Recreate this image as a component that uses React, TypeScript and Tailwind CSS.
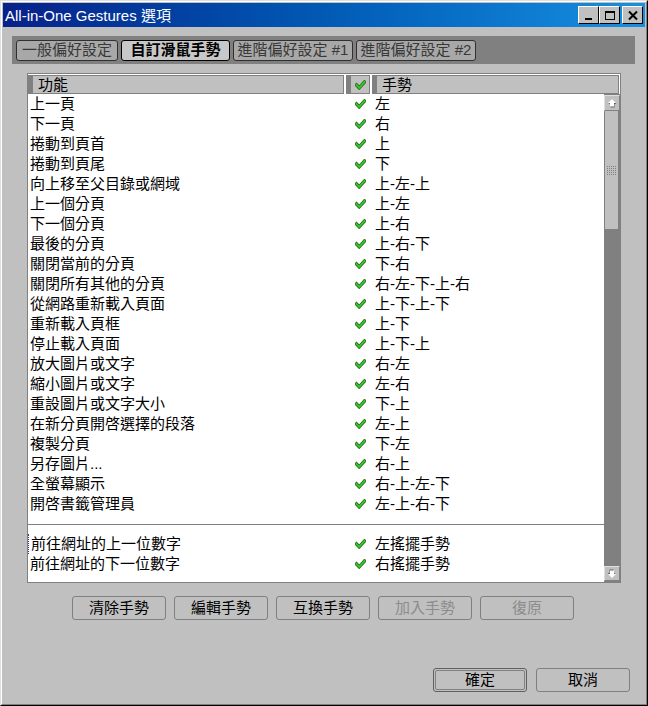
import React from "react";

const rows: [string, string][] = [
  ["上一頁", "左"],
  ["下一頁", "右"],
  ["捲動到頁首", "上"],
  ["捲動到頁尾", "下"],
  ["向上移至父目錄或網域", "上-左-上"],
  ["上一個分頁", "上-左"],
  ["下一個分頁", "上-右"],
  ["最後的分頁", "上-右-下"],
  ["關閉當前的分頁", "下-右"],
  ["關閉所有其他的分頁", "右-左-下-上-右"],
  ["從網路重新載入頁面", "上-下-上-下"],
  ["重新載入頁框", "上-下"],
  ["停止載入頁面", "上-下-上"],
  ["放大圖片或文字", "右-左"],
  ["縮小圖片或文字", "左-右"],
  ["重設圖片或文字大小", "下-上"],
  ["在新分頁開啓選擇的段落", "左-上"],
  ["複製分頁", "下-左"],
  ["另存圖片...", "右-上"],
  ["全螢幕顯示", "右-上-左-下"],
  ["開啓書籤管理員", "左-上-右-下"],
];

const rows2: [string, string][] = [
  ["前往網址的上一位數字", "左搖擺手勢"],
  ["前往網址的下一位數字", "右搖擺手勢"],
];

function Check() {
  return (
    <svg width="11" height="10" viewBox="0 0 11 10">
      <polyline points="1.5,5 4.2,7.8 9.5,2" fill="none" stroke="#3f6f10" strokeWidth="3.4" strokeLinecap="square" />
      <polyline points="1.5,5 4.2,7.8 9.5,2" fill="none" stroke="#22d040" strokeWidth="1.6" strokeLinecap="square" />
    </svg>
  );
}

function Arrow({ down }: { down?: boolean }) {
  return (
    <svg width="10" height="10" viewBox="0 0 10 10" style={down ? { transform: "rotate(180deg)" } : undefined}>
      <polygon points="5.5,2 9.5,6 7.5,6 7.5,9.5 3.5,9.5 3.5,6 1.5,6" fill="#606060" />
      <polygon points="5,1 9,5 7,5 7,8.5 3,8.5 3,5 1,5" fill="#ffffff" />
    </svg>
  );
}

function TitleBtn({ kind }: { kind: "min" | "max" | "close" }) {
  return (
    <div className="w-[21px] h-[18px] bg-[#c0c0c0] border border-t-white border-l-white border-r-black border-b-black flex items-center justify-center">
      <svg width="12" height="11" viewBox="0 0 12 11">
        {kind === "min" && <rect x="2" y="8" width="7" height="2" fill="black" />}
        {kind === "max" && (
          <>
            <rect x="1.5" y="1.5" width="9" height="8" fill="none" stroke="black" strokeWidth="1" />
            <rect x="1" y="1" width="10" height="2" fill="black" />
          </>
        )}
        {kind === "close" && (
          <path d="M2 1.5 L10 9.5 M10 1.5 L2 9.5" stroke="black" strokeWidth="2" />
        )}
      </svg>
    </div>
  );
}

function HeaderCell({ w, children }: { w: string; children?: React.ReactNode }) {
  return (
    <div className={`${w} h-[19px] bg-[#c0c0c0] border border-[#808080] flex items-center`}>
      <div className="w-[4px] h-full bg-[#808080]" />
      {children}
    </div>
  );
}

function Row({ f, g, focus }: { f: string; g: string; focus?: boolean }) {
  return (
    <div className="h-[20px] flex items-center text-[15px] leading-[20px] text-black">
      <div className={`w-[316px] pl-[2px] whitespace-nowrap ${focus ? "border-l border-dotted border-[#3030a0]" : ""}`}>{f}</div>
      <div className="w-[28px] flex justify-center ml-[2px]">
        <Check />
      </div>
      <div className="flex-1 pl-[1px] whitespace-nowrap">{g}</div>
    </div>
  );
}

function Btn({ label, disabled, def }: { label: string; disabled?: boolean; def?: boolean }) {
  return (
    <div
      className={`w-[94px] h-[24px] rounded-[3px] border flex items-center justify-center text-[15px] ${
        def ? "border-[#606060] p-[1px]" : "border-[#808080]"
      } ${disabled ? "text-[#8c8c8c]" : "text-black"}`}
    >
      {def ? (
        <div className="w-full h-full rounded-[2px] border border-[#808080] flex items-center justify-center">{label}</div>
      ) : (
        label
      )}
    </div>
  );
}

export default function App() {
  return (
    <div className="w-[648px] h-[706px] bg-[#c0c0c0] border border-t-[#dfdfdf] border-l-[#dfdfdf] border-r-black border-b-black font-['Liberation_Sans','Noto_Sans_CJK_TC',sans-serif] overflow-hidden">
      <div className="w-full h-full border border-t-white border-l-white border-r-[#808080] border-b-[#808080] p-[1px] flex flex-col">
        {/* Title bar */}
        <div className="h-[24px] bg-gradient-to-r from-[#08208a] to-[#1890e0] flex items-center pl-[2px] pr-[2px]">
          <span className="text-white text-[15px] leading-none">All-in-One Gestures 選項</span>
          <div className="ml-auto flex items-center">
            <TitleBtn kind="min" />
            <TitleBtn kind="max" />
            <div className="w-[2px]" />
            <TitleBtn kind="close" />
          </div>
        </div>

        {/* Tab bar */}
        <div className="mt-[9px] ml-[9px] mr-[10px] h-[28px] bg-[#808080] flex items-start pt-[4px] pl-[4px] gap-[3px]">
          <div className="w-[102px] h-[21px] rounded-[3px] border border-[#303030] bg-[#a8a8a8] text-[#383838] text-[15px] flex items-center justify-center whitespace-nowrap">一般偏好設定</div>
          <div className="w-[109px] h-[21px] rounded-[3px] border border-black bg-[#c8c8c8] text-black font-bold text-[15px] flex items-center justify-center whitespace-nowrap">自訂滑鼠手勢</div>
          <div className="w-[120px] h-[21px] rounded-[3px] border border-[#303030] bg-[#a8a8a8] text-[#383838] text-[15px] flex items-center justify-center whitespace-nowrap">進階偏好設定 #1</div>
          <div className="w-[120px] h-[21px] rounded-[3px] border border-[#303030] bg-[#a8a8a8] text-[#383838] text-[15px] flex items-center justify-center whitespace-nowrap">進階偏好設定 #2</div>
        </div>

        {/* List box */}
        <div className="mt-[9px] ml-[24px] w-[594px] h-[510px] border border-[#808080] bg-white flex flex-col">
          <div className="flex pt-[1px] gap-[2px] h-[20px]">
            <HeaderCell w="w-[316px]">
              <span className="pl-[5px] text-[15px] text-black leading-none">功能</span>
            </HeaderCell>
            <HeaderCell w="w-[24px]">
              <div className="flex-1 flex justify-center">
                <Check />
              </div>
            </HeaderCell>
            <HeaderCell w="w-[247px]">
              <span className="pl-[5px] text-[15px] text-black leading-none">手勢</span>
            </HeaderCell>
          </div>
          <div className="flex flex-1">
            <div className="w-[576px] flex flex-col">
              {rows.map(([f, g]) => (
                <Row key={f} f={f} g={g} />
              ))}
              <div className="h-[20px] flex flex-col justify-center">
                <div className="h-[1px] bg-[#808080]" />
              </div>
              {rows2.map(([f, g], i) => (
                <Row key={f} f={f} g={g} focus={i === 0} />
              ))}
            </div>
            {/* Scrollbar */}
            <div className="w-[16px] bg-[#808080] flex flex-col">
              <div className="h-[16px] mt-[1px] bg-[#c0c0c0] border border-t-[#dfdfdf] border-l-[#dfdfdf] border-r-[#808080] border-b-[#808080] flex items-center justify-center">
                <Arrow />
              </div>
              <div className="h-[118px] bg-[#c0c0c0] border-l border-r-2 border-[#808080] flex items-center justify-center">
                <div className="grid grid-cols-5 gap-[1px]">
                  {Array.from({ length: 25 }).map((_, i) => (
                    <div key={i} className="w-[1px] h-[1px] bg-[#808080]" />
                  ))}
                </div>
              </div>
              <div className="flex-1" />
              <div className="h-[15px] mb-[1px] bg-[#c0c0c0] border border-t-[#dfdfdf] border-l-[#dfdfdf] border-r-[#808080] border-b-[#808080] flex items-center justify-center">
                <Arrow down />
              </div>
            </div>
          </div>
        </div>

        {/* Action buttons */}
        <div className="mt-[13px] ml-[69px] flex gap-[8px]">
          <Btn label="清除手勢" />
          <Btn label="編輯手勢" />
          <Btn label="互換手勢" />
          <Btn label="加入手勢" disabled />
          <Btn label="復原" disabled />
        </div>

        {/* OK / Cancel */}
        <div className="mt-[48px] ml-[430px] flex gap-[9px]">
          <Btn label="確定" def />
          <Btn label="取消" />
        </div>
      </div>
    </div>
  );
}
